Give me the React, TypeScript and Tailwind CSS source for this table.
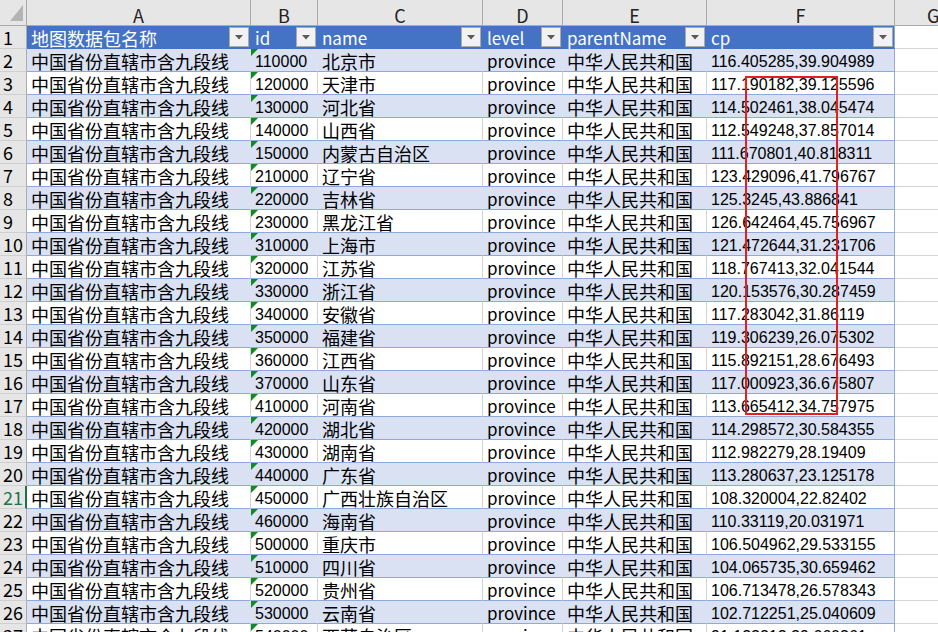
import React from "react";

type Row = { id: string; name: string; cp: string };

const rows: Row[] = [
  { id: "110000", name: "北京市", cp: "116.405285,39.904989" },
  { id: "120000", name: "天津市", cp: "117.190182,39.125596" },
  { id: "130000", name: "河北省", cp: "114.502461,38.045474" },
  { id: "140000", name: "山西省", cp: "112.549248,37.857014" },
  { id: "150000", name: "内蒙古自治区", cp: "111.670801,40.818311" },
  { id: "210000", name: "辽宁省", cp: "123.429096,41.796767" },
  { id: "220000", name: "吉林省", cp: "125.3245,43.886841" },
  { id: "230000", name: "黑龙江省", cp: "126.642464,45.756967" },
  { id: "310000", name: "上海市", cp: "121.472644,31.231706" },
  { id: "320000", name: "江苏省", cp: "118.767413,32.041544" },
  { id: "330000", name: "浙江省", cp: "120.153576,30.287459" },
  { id: "340000", name: "安徽省", cp: "117.283042,31.86119" },
  { id: "350000", name: "福建省", cp: "119.306239,26.075302" },
  { id: "360000", name: "江西省", cp: "115.892151,28.676493" },
  { id: "370000", name: "山东省", cp: "117.000923,36.675807" },
  { id: "410000", name: "河南省", cp: "113.665412,34.757975" },
  { id: "420000", name: "湖北省", cp: "114.298572,30.584355" },
  { id: "430000", name: "湖南省", cp: "112.982279,28.19409" },
  { id: "440000", name: "广东省", cp: "113.280637,23.125178" },
  { id: "450000", name: "广西壮族自治区", cp: "108.320004,22.82402" },
  { id: "460000", name: "海南省", cp: "110.33119,20.031971" },
  { id: "500000", name: "重庆市", cp: "106.504962,29.533155" },
  { id: "510000", name: "四川省", cp: "104.065735,30.659462" },
  { id: "520000", name: "贵州省", cp: "106.713478,26.578343" },
  { id: "530000", name: "云南省", cp: "102.712251,25.040609" },
  { id: "540000", name: "西藏自治区", cp: "91.132212,29.660361" },
];

// column widths incl. right gridline
const W = ["w-[224px]", "w-[67px]", "w-[165px]", "w-[80px]", "w-[144px]", "w-[188px]"];
const LETTERS = ["A", "B", "C", "D", "E", "F"];
const HEADS = ["地图数据包名称", "id", "name", "level", "parentName", "cp"];

function FilterButton() {
  return (
    <div className="w-[20px] h-[20px] shrink-0 mr-[1px] border border-[#ABABAB] bg-[#F2F2F2] flex items-center justify-center">
      <svg width="8" height="5" viewBox="0 0 8 5">
        <polygon points="0,0 8,0 4,4.5" fill="#5A5A5A" />
      </svg>
    </div>
  );
}

function RowHead({ n }: { n: number }) {
  const sel = n === 21;
  return (
    <div
      className={
        "w-[27px] shrink-0 h-full flex items-center pl-[3px] bg-[#E6E6E6] border-b border-[#D0D0D0] " +
        (sel ? "border-r-2 border-r-[#217346] text-[#217346]" : "border-r border-r-[#ABABAB] text-black")
      }
    >
      {n}
    </div>
  );
}

function Cell({ i, band, children, mark }: { i: number; band: boolean; children: React.ReactNode; mark?: boolean }) {
  const right = i === 5 ? "border-r-[#8EA9DB]" : band ? "border-r-[#D9E1F2]" : "border-r-[#D4D4D4]";
  return (
    <div
      className={
        W[i] +
        " relative shrink-0 h-full flex items-center pl-[4px] pt-[1px] overflow-hidden whitespace-nowrap border-r border-b border-b-[#8EA9DB] " +
        right +
        (band ? " bg-[#D9E1F2]" : " bg-white")
      }
    >
      {mark && (
        <svg className="absolute left-0 top-0" width="7" height="7" viewBox="0 0 7 7">
          <polygon points="0,0 7,0 0,7" fill="#108A24" />
        </svg>
      )}
      {children}
    </div>
  );
}

const latin = "text-[17px]";
const num = "pt-[2px] text-[16px] font-['Liberation_Sans',sans-serif]";

export default function App() {
  return (
    <div
      className="w-[938px] h-[632px] overflow-hidden bg-white text-[18px] leading-[18px] text-black relative"
      style={{ fontFamily: '"Noto Sans CJK SC", "Noto Sans", sans-serif' }}
    >
      {/* column letters */}
      <div className="flex h-[26px]">
        <div className="w-[27px] shrink-0 h-full bg-[#E6E6E6] border-r border-b border-[#ABABAB] relative">
          <svg className="absolute left-[10px] top-[5px]" width="13" height="16" viewBox="0 0 13 16">
            <polygon points="13,0 13,16 0,16" fill="#B4B4B4" />
          </svg>
        </div>
        {LETTERS.map((l, i) => (
          <div
            key={l}
            className={W[i] + " shrink-0 h-full flex items-end justify-center pb-[1px] bg-[#E6E6E6] border-r border-b border-[#ABABAB] text-[#222]"}
          >
            {l}
          </div>
        ))}
        <div className="flex-1 h-full flex items-end pl-[32px] pb-[1px] bg-[#E6E6E6] border-b border-[#ABABAB] text-[#222]">G</div>
      </div>

      {/* table header row */}
      <div className="flex h-[23px]">
        <RowHead n={1} />
        {HEADS.map((h, i) => (
          <div
            key={h}
            className={
              W[i] +
              " shrink-0 h-full flex items-center justify-between pl-[4px] bg-[#4472C4] text-white border-r border-b border-[#4472C4] " +
              (i === 5 ? "border-r-[#8EA9DB]" : "")
            }
          >
            <span className={"pt-[2px] whitespace-nowrap " + (i === 0 ? "" : latin)}>{h}</span>
            <FilterButton />
          </div>
        ))}
        <div className="flex-1 h-full border-b border-[#D4D4D4]" />
      </div>

      {rows.map((r, idx) => {
        const n = idx + 2;
        const band = n % 2 === 0;
        return (
          <div key={r.id} className="flex h-[23px]">
            <RowHead n={n} />
            <Cell i={0} band={band}>中国省份直辖市含九段线</Cell>
            <Cell i={1} band={band} mark>
              <span className={num}>{r.id}</span>
            </Cell>
            <Cell i={2} band={band}>{r.name}</Cell>
            <Cell i={3} band={band}>
              <span className={latin}>province</span>
            </Cell>
            <Cell i={4} band={band}>中华人民共和国</Cell>
            <Cell i={5} band={band}>
              <span className={num}>{r.cp}</span>
            </Cell>
            <div className="flex-1 h-full border-b border-[#D4D4D4]" />
          </div>
        );
      })}

      {/* red highlight box */}
      <div className="absolute left-[745px] top-[76px] w-[93px] h-[339px] border-2 border-[#E3201F]" />
    </div>
  );
}
